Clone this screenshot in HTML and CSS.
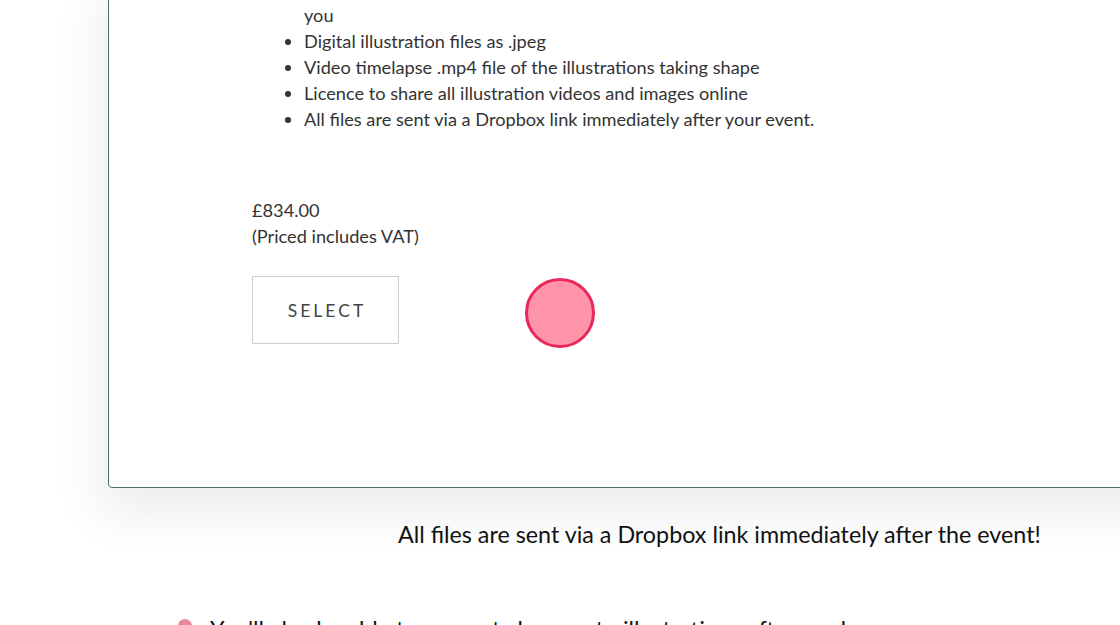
FILE: index.html
```html
<!DOCTYPE html>
<html>
<head>
<meta charset="utf-8">
<link rel="stylesheet" href="styles.css">
</head>
<body>
<div class="page">
  <div class="card">
    <ul class="features">
      <li>Live illustrations of your key messages and ideas drawn by our artist just for<br>you</li>
      <li>Digital illustration files as .jpeg</li>
      <li>Video timelapse .mp4 file of the illustrations taking shape</li>
      <li>Licence to share all illustration videos and images online</li>
      <li>All files are sent via a Dropbox link immediately after your event.</li>
    </ul>
    <div class="price">
      <div>£834.00</div>
      <div>(Priced includes VAT)</div>
    </div>
    <button class="select">SELECT</button>
  </div>
  <p class="note">All files are sent via a Dropbox link immediately after the event!</p>
  <p class="next"><span class="emoji"></span>You'll also be able to request changes to illustrations afterwards</p>
  <div class="click"></div>
</div>
</body>
</html>
```

FILE: styles.css
```css
html, body {
  margin: 0;
  padding: 0;
  background: #ffffff;
  overflow: hidden;
  height: 625px;
}
.page {
  position: relative;
  display: flow-root;
  width: 1120px;
  height: 625px;
  font-family: Lato, "Open Sans", sans-serif;
  color: #333333;
}
.card {
  margin-top: -25px;
  margin-left: 108px;
  width: 1100px;
  border: 1px solid #4f6e6c;
  border-radius: 4px;
  background: #ffffff;
  box-shadow: -8px 24px 50px rgba(30, 40, 40, 0.09);
  padding: 0 0 143px 143px;
  box-sizing: border-box;
}
.features {
  margin: 0;
  padding: 0 0 0 52px;
  font-size: 18.2px;
  line-height: 26px;
}
.price {
  margin-top: 65px;
  font-size: 18.2px;
  line-height: 26px;
}
.select {
  display: block;
  margin-top: 27px;
  width: 147px;
  height: 68px;
  border: 1px solid #cfcfcf;
  background: #ffffff;
  font-family: Lato, "Open Sans", sans-serif;
  font-size: 17.5px;
  letter-spacing: 3px;
  color: #444444;
  padding: 0 0 0 3px;
}
.note {
  margin: 31px 0 0 398px;
  font-size: 23.3px;
  line-height: 30px;
  color: #111111;
}
.next {
  margin: 65px 0 0 178px;
  font-size: 23.3px;
  line-height: 30px;
  color: #111111;
  white-space: nowrap;
  display: flex;
  align-items: center;
  gap: 18px;
}
.emoji {
  display: inline-block;
  width: 14px;
  height: 20px;
  background: #e88a9a;
  border-radius: 7px 7px 2px 2px;
}
.click {
  position: absolute;
  left: 525px;
  top: 278px;
  width: 70px;
  height: 70px;
  box-sizing: border-box;
  border: 3px solid #e8285a;
  border-radius: 50%;
  background: #ff94a8;
}
```
